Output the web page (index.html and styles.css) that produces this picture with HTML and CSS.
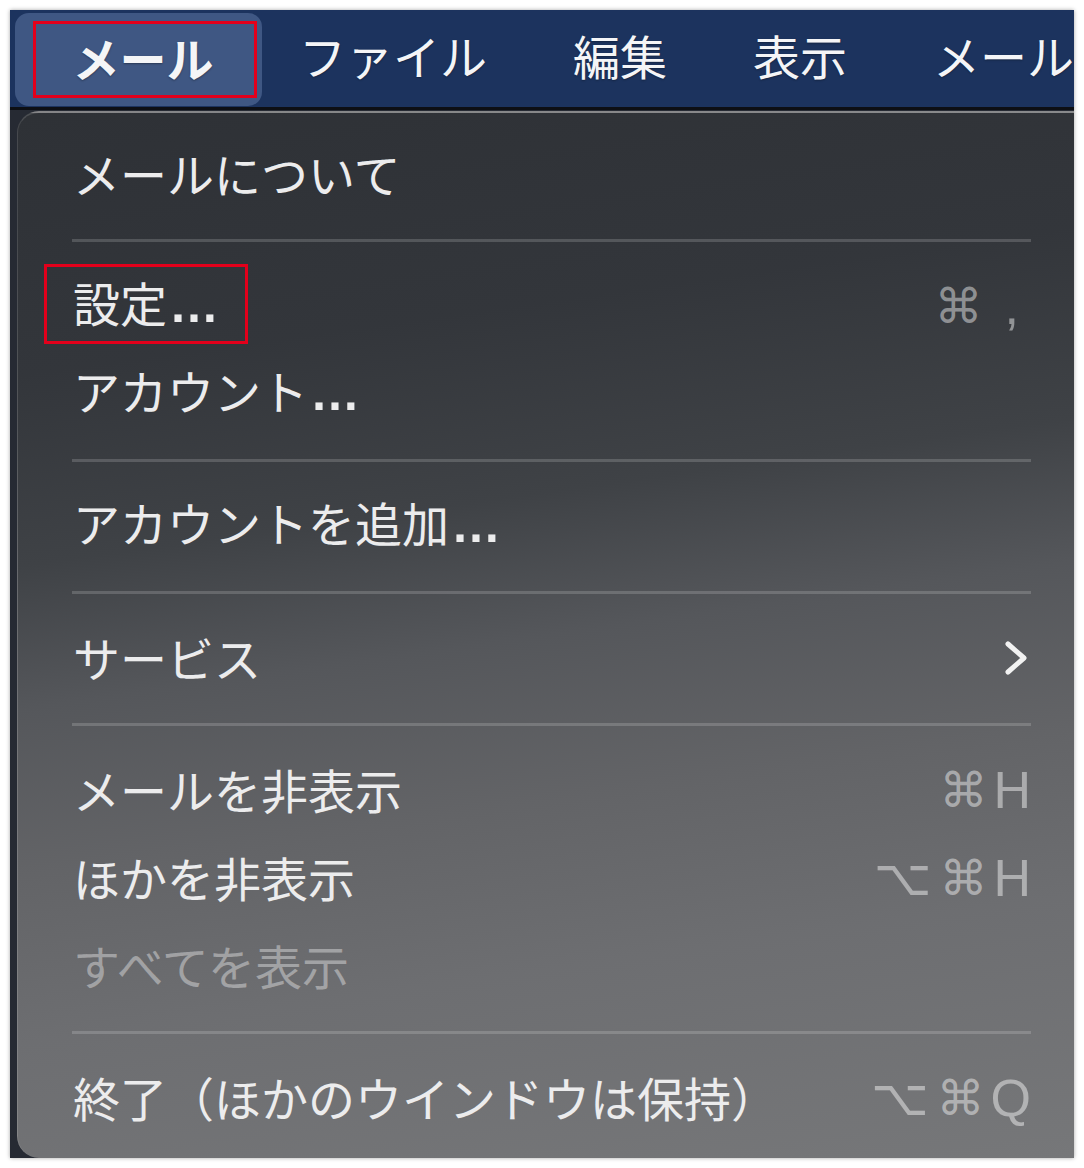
FILE: index.html
```html
<!DOCTYPE html>
<html lang="ja">
<head>
<meta charset="utf-8">
<title>メール</title>
<link rel="stylesheet" href="styles.css">
</head>
<body>
<div class="frame">
  <header class="menubar">
    <div class="app-tile"><span class="app-name">メール</span></div>
    <span class="bar-item first">ファイル</span>
    <span class="bar-item">編集</span>
    <span class="bar-item">表示</span>
    <span class="bar-item">メール</span>
  </header>
  <div class="below">
    <div class="panel">
      <div class="row"><span class="label">メールについて</span></div>
      <div class="sep"></div>
      <div class="row marked"><span class="label">設定<span class="dots">…</span></span><span class="keys"><span class="k cmd">⌘</span><span class="k comma">,</span></span></div>
      <div class="row"><span class="label">アカウント<span class="dots">…</span></span></div>
      <div class="sep"></div>
      <div class="row"><span class="label">アカウントを追加<span class="dots">…</span></span></div>
      <div class="sep"></div>
      <div class="row"><span class="label">サービス</span>
        <svg class="chev" width="26" height="36" viewBox="0 0 26 36"><polyline points="5,4 21,18 5,32" fill="none" stroke="#f2f2f2" stroke-width="5" stroke-linecap="round" stroke-linejoin="round"/></svg>
      </div>
      <div class="sep"></div>
      <div class="row"><span class="label">メールを非表示</span><span class="keys"><span class="k cmd">⌘</span><span class="k">H</span></span></div>
      <div class="row"><span class="label">ほかを非表示</span><span class="keys"><span class="k opt">⌥</span><span class="k cmd">⌘</span><span class="k">H</span></span></div>
      <div class="row disabled"><span class="label">すべてを表示</span></div>
      <div class="sep"></div>
      <div class="row"><span class="label">終了（ほかのウインドウは保持）</span><span class="keys"><span class="k opt">⌥</span><span class="k cmd">⌘</span><span class="k">Q</span></span></div>
    </div>
  </div>
</div>
</body>
</html>
```

FILE: styles.css
```css
html, body {
  margin: 0;
  padding: 0;
  background: #ffffff;
}
body {
  width: 1084px;
  height: 1168px;
  overflow: hidden;
  font-family: "Noto Sans CJK JP", "Noto Sans", sans-serif;
}
.frame {
  margin: 10px;
  width: 1064px;
  height: 1148px;
  overflow: hidden;
  box-shadow: 0 0 4px rgba(0, 0, 0, 0.35);
  display: flex;
  flex-direction: column;
  background: #23272f;
}
.menubar {
  height: 97px;
  flex: none;
  background: #1c335e;
  border-bottom: 3px solid #0d0f14;
  display: flex;
  align-items: center;
  color: #f4f5f7;
  font-size: 47px;
  white-space: nowrap;
}
.app-tile {
  margin-left: 5px;
  width: 253px;
  height: 93px;
  box-sizing: border-box;
  border-radius: 14px;
  background: #3f5783;
  display: flex;
  align-items: center;
  padding-left: 18px;
  margin-top: 2px;
}
.app-name {
  box-sizing: border-box;
  width: 224px;
  height: 77px;
  border: 3px solid #e3001b;
  display: flex;
  align-items: center;
  justify-content: center;
  font-weight: 700;
  line-height: 1;
  padding-bottom: 6px;
  padding-right: 4px;
  text-shadow: 0 1px 2px rgba(0, 0, 0, 0.35);
}
.bar-item {
  margin-left: 86px;
  line-height: 1;
  padding-bottom: 8px;
  text-shadow: 0 1px 2px rgba(0, 0, 0, 0.3);
}
.bar-item.first {
  margin-left: 37px;
}
.below {
  flex: 1;
  background: #262a33;
  padding: 1px 0 0 7px;
  display: flex;
}
.panel {
  flex: 1;
  border-top-left-radius: 22px;
  border-bottom-left-radius: 22px;
  border-top: 2px solid rgba(255, 255, 255, 0.14);
  border-left: 1px solid rgba(255, 255, 255, 0.1);
  background: linear-gradient(172deg, #2e3136 0%, #33363b 22%, #3f4246 38%, #55575b 50%, #636467 64%, #6d6e71 78%, #767779 100%);
  padding-top: 17px;
  color: #ececed;
  font-size: 47px;
}
.row {
  height: 88px;
  display: flex;
  align-items: center;
  justify-content: space-between;
  padding: 0 43px 0 55px;
  position: relative;
  line-height: 1;
}
.label {
  white-space: nowrap;
  padding-bottom: 4px;
}
.dots {
  font-family: "Liberation Sans", "DejaVu Sans", sans-serif;
  font-size: 50px;
  font-weight: 700;
  margin-left: 2px;
}
.row.disabled .label {
  color: rgba(255, 255, 255, 0.38);
}
.row.marked::before {
  content: "";
  position: absolute;
  left: 26px;
  top: 2px;
  width: 204px;
  height: 80px;
  box-sizing: border-box;
  border: 3px solid #e3001b;
}
.keys {
  display: flex;
  align-items: center;
  gap: 6px;
  font-family: "Liberation Sans", "DejaVu Sans", sans-serif;
  font-size: 52px;
  color: rgba(255, 255, 255, 0.45);
}
.k {
  display: inline-block;
}
.k.cmd {
  font-family: "DejaVu Sans", sans-serif;
  font-size: 48px;
}
.k.opt {
  font-family: "DejaVu Sans", sans-serif;
  font-size: 50px;
  margin-right: 2px;
}
.k.comma {
  margin-left: 16px;
  margin-right: 12px;
}
.chev {
  display: block;
  margin-right: 2px;
}
.sep {
  height: 44px;
  display: flex;
  align-items: center;
  padding: 0 43px 0 54px;
}
.sep::before {
  content: "";
  display: block;
  flex: 1;
  height: 3px;
  background: rgba(255, 255, 255, 0.17);
}
```
